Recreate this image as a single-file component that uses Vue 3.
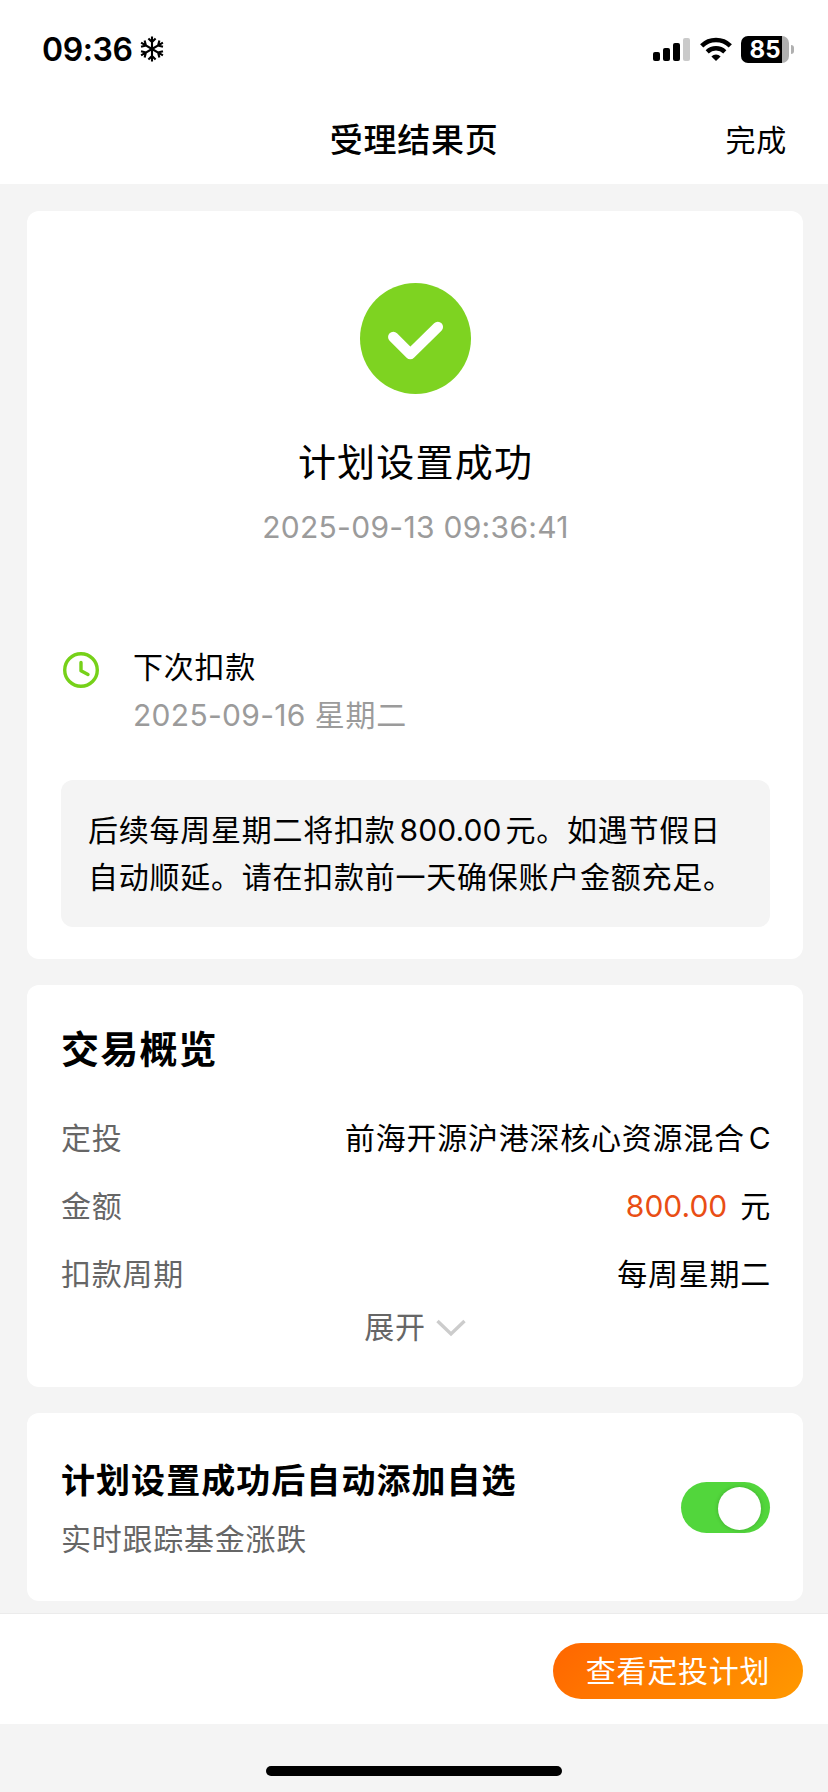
<template>
  <div class="page">
    <header class="top">
      <div class="status">
        <div class="clock">
          <span class="time">09:36</span>
          <svg class="snow" viewBox="0 0 24 26" width="24" height="26" fill="none" stroke="#000" stroke-width="2.1">
            <g v-for="a in [0, 60, 120, 180, 240, 300]" :key="a" :transform="`rotate(${a} 12 13)`">
              <path d="M12 13V0.4M8.4 2.4l3.6 3.6 3.6-3.6" />
            </g>
          </svg>
        </div>
        <div class="indicators">
          <svg viewBox="0 0 37 24" width="37" height="24">
            <rect x="0" y="14" width="7" height="9" rx="2" />
            <rect x="10" y="10" width="7" height="13" rx="2" />
            <rect x="20" y="5" width="7" height="18" rx="2" />
            <rect x="30" y="0" width="7" height="23" rx="2" fill="#cacaca" />
          </svg>
          <svg class="wifi" viewBox="0 0 32 24" width="32" height="24">
            <path d="M1.7 8.8a20.5 20.5 0 0 1 28.6 0" fill="none" stroke="#000" stroke-width="4.6" />
            <path d="M7.2 14.9a12.6 12.6 0 0 1 17.6 0" fill="none" stroke="#000" stroke-width="4.4" />
            <path d="M16 24l-4.6-4.6a6.6 6.6 0 0 1 9.2 0z" />
          </svg>
          <div class="battery"><span>85</span></div>
          <i class="nub"></i>
        </div>
      </div>
      <nav class="nav">
        <h1>受理结果页</h1>
        <a class="done">完成</a>
      </nav>
    </header>

    <main class="content">
      <section class="card result">
        <svg class="check" viewBox="0 0 111 111" width="111" height="111">
          <circle cx="55.5" cy="55.5" r="55.5" fill="#7ed321" />
          <path d="M33.3 54l17 17L77.8 44" fill="none" stroke="#fff" stroke-width="10.5" stroke-linecap="round" stroke-linejoin="round" />
        </svg>
        <h2>计划设置成功</h2>
        <p class="stamp num">2025-09-13 09:36:41</p>
        <div class="next">
          <svg viewBox="0 0 36 36" width="36" height="36" fill="none" stroke="#76d119" stroke-width="3.4">
            <circle cx="18" cy="18" r="16.3" />
            <path d="M18 10.5v8.2l7 3.8" stroke-linecap="round" stroke-linejoin="round" />
          </svg>
          <div>
            <div class="next-label">下次扣款</div>
            <div class="next-date"><span class="num">2025-09-16</span>星期二</div>
          </div>
        </div>
        <div class="notice">
          后续每周星期二将扣款<span class="num">800.00</span>元。如遇节假日<br>自动顺延。请在扣款前一天确保账户金额充足。
        </div>
      </section>

      <section class="card overview">
        <h3>交易概览</h3>
        <div v-for="row in rows" :key="row.label" class="row">
          <span class="label">{{ row.label }}</span>
          <span class="value">
            <span v-if="row.amount" class="num amount">{{ row.amount }}</span>{{ row.value }}<span v-if="row.suffix" class="num suffix">{{ row.suffix }}</span>
          </span>
        </div>
        <div class="expand">
          <span>展开</span>
          <svg viewBox="0 0 30 18" width="30" height="18" fill="none" stroke="#ccc" stroke-width="3.4"><path d="M1.5 2L15 15 28.5 2" /></svg>
        </div>
      </section>

      <section class="card favorite">
        <div>
          <h4>计划设置成功后自动添加自选</h4>
          <p>实时跟踪基金涨跌</p>
        </div>
        <button type="button" class="switch" :class="{ on: autoAdd }" aria-label="自动添加自选" @click="autoAdd = !autoAdd"><i></i></button>
      </section>
    </main>

    <footer class="bar">
      <button type="button" class="primary">查看定投计划</button>
    </footer>
    <div class="home"><i></i></div>
  </div>
</template>

<script setup>
import { ref } from 'vue'

const autoAdd = ref(true)

const rows = [
  { label: '定投', value: '前海开源沪港深核心资源混合', suffix: 'C' },
  { label: '金额', amount: '800.00', value: '元' },
  { label: '扣款周期', value: '每周星期二' },
]
</script>

<style>
body { margin: 0; background: #f4f4f4; }
</style>

<style scoped>
.page { width: 828px; height: 1792px; display: flex; flex-direction: column; overflow: hidden; background: #f4f4f4; color: #000; font-family: "Noto Sans CJK SC", sans-serif; font-size: 30px; letter-spacing: 0.75px; }
h1, h2, h3, h4, p { margin: 0; }
svg { display: block; flex-shrink: 0; }
button { border: none; padding: 0; font: inherit; letter-spacing: inherit; }
.num { font-family: Inter, sans-serif; line-height: 1; letter-spacing: 0.3px; }

.top { height: 184px; background: #fff; }
.status { height: 100px; display: flex; justify-content: space-between; padding: 0 34px 0 42px; box-sizing: border-box; }
.clock { display: flex; align-items: flex-start; padding-top: 30px; }
.time { font-family: Inter, sans-serif; font-size: 32px; font-weight: 600; line-height: 40px; letter-spacing: -0.4px; width: 98px; }
.snow { margin-top: 6px; }
.indicators { display: flex; align-items: flex-start; padding-top: 38px; }
.wifi { margin: -1px 0 0 10px; }
.battery { width: 48px; height: 27px; margin: -2px 0 0 9px; border-radius: 7px; background: linear-gradient(90deg, #000 41px, #b0b0b0 41px); color: #fff; font: 700 24px/28px Inter, sans-serif; letter-spacing: 0; text-align: center; }
.nub { width: 3px; height: 9px; margin: 7px 0 0 2px; border-radius: 0 4px 4px 0; background: #b0b0b0; }
.nav { height: 76px; display: grid; grid-template-columns: 1fr auto 1fr; align-items: center; }
.nav h1 { grid-column: 2; font-size: 33px; font-weight: 500; }
.done { justify-self: end; margin-right: 41px; }

.content { height: 1429px; padding: 27px 25px 0 27px; box-sizing: border-box; display: flex; flex-direction: column; gap: 26px; }
.card { flex-shrink: 0; box-sizing: border-box; border-radius: 12px; background: #fff; }
.result { height: 748px; padding: 72px 33px 0 34px; }
.check { margin: 0 auto; }
.result h2 { margin-top: 36px; font-size: 38px; font-weight: 400; line-height: 60px; letter-spacing: 1.2px; text-align: center; }
.stamp { margin-top: 17px; line-height: 40px; color: #9b9b9b; text-align: center; }
.next { height: 96px; margin-top: 92px; display: flex; gap: 34px; padding-left: 2px; line-height: 48px; }
.next svg { margin-top: 13px; }
.next-label { margin-top: 2px; }
.next-date { color: #9b9b9b; }
.next-date .num { margin-right: 9px; }
.notice { height: 147px; margin-top: 45px; padding: 25px 0 0 27px; box-sizing: border-box; border-radius: 12px; background: #f4f4f4; line-height: 47px; white-space: nowrap; }
.notice .num { margin: 0 4px; letter-spacing: 0.1px; }

.overview { height: 402px; padding: 32px 32px 0 34px; }
.overview h3 { font-size: 38px; font-weight: 700; line-height: 60px; letter-spacing: 1.2px; margin-bottom: 25px; }
.row { height: 68px; display: flex; justify-content: space-between; align-items: center; line-height: 44px; }
.label { color: #666; }
.amount { margin-right: 13px; letter-spacing: 0; color: #e94e14; }
.suffix { margin-left: 4px; }
.expand { display: flex; justify-content: center; align-items: center; gap: 10px; line-height: 44px; margin: -3px 2px 0 0; color: #666; }
.expand svg { margin-top: 6px; }

.favorite { height: 188px; padding: 0 33px 0 34px; display: flex; justify-content: space-between; align-items: flex-start; }
.favorite h4 { margin-top: 41px; font-size: 34px; font-weight: 700; line-height: 50px; letter-spacing: 1.05px; }
.favorite p { margin-top: 10px; line-height: 46px; color: #666; }
.switch { display: flex; justify-content: flex-start; width: 89px; height: 51px; margin-top: 69px; padding: 5px 9px 0; border-radius: 26px; background: #ddd; }
.switch.on { justify-content: flex-end; background: #52d63c; }
.switch i { width: 43px; height: 43px; border-radius: 50%; background: #fff; box-shadow: 0 0 4px rgba(0,0,0,0.2); }

.bar { height: 111px; padding: 29px 25px 0 0; box-sizing: border-box; display: flex; justify-content: flex-end; border-top: 1px solid #ebebeb; background: #fff; }
.primary { width: 250px; height: 56px; padding-bottom: 4px; border-radius: 28px; background: linear-gradient(135deg, #ff6600, #ff9900); color: #fff; }
.home { display: flex; justify-content: center; padding-top: 42px; }
.home i { width: 296px; height: 10px; border-radius: 5px; background: #000; }
</style>
